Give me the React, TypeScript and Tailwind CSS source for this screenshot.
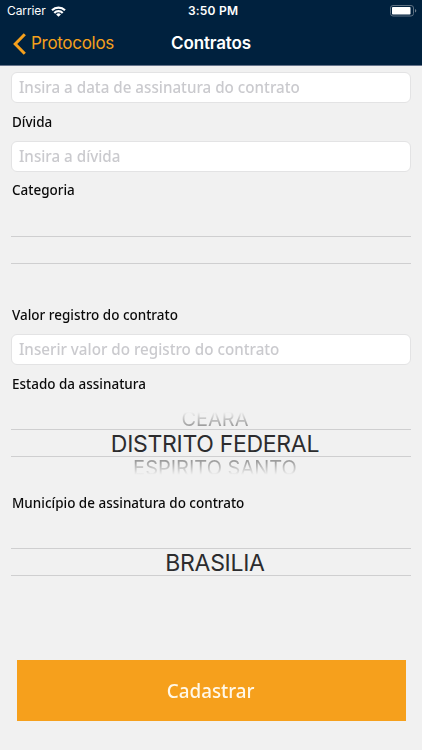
import type { ReactNode } from 'react';

function StatusBar() {
    return (
        <div className="relative flex h-[22px] items-center justify-between pl-[7px] pr-[5px] text-white">
            <div className="flex items-center gap-[5px]">
                <span className="text-[12px] tracking-[-0.1px]">Carrier</span>
                <svg width="15" height="11" viewBox="0 0 15 11" fill="none" stroke="white" strokeWidth="2.2">
                    <path d="M1 4.2a9.4 9.4 0 0 1 13 0" />
                    <path d="M3.3 7a5.8 5.8 0 0 1 8.4 0" />
                    <path d="M7.5 10.8 5.1 8.5a3.4 3.4 0 0 1 4.8 0z" fill="white" stroke="none" />
                </svg>
            </div>
            <span className="absolute left-[188px] text-[12px] font-semibold tracking-[0.2px]">3:50 PM</span>
            <svg width="27" height="12" viewBox="0 0 27 12">
                <rect x="0.5" y="0.5" width="23" height="10.5" rx="2.5" fill="none" stroke="#5d7082" />
                <rect x="2" y="2" width="18.5" height="7.5" rx="0.8" fill="white" />
                <path d="M25 4v3.6c1.8-.6 1.8-3 0-3.6z" fill="#71818f" />
            </svg>
        </div>
    );
}

function NavBar() {
    return (
        <div className="relative flex h-[43px] items-center justify-center">
            <button className="absolute left-[13px] flex items-center gap-[5px] text-[#f5a01c]">
                <svg width="13" height="22" viewBox="0 0 13 22" fill="none" stroke="currentColor" strokeWidth="3">
                    <path d="M11.8 1.2 2.2 11l9.6 9.8" />
                </svg>
                <span className="text-[17px] tracking-[-0.3px]">Protocolos</span>
            </button>
            <h1 className="text-[17px] font-semibold tracking-[-0.15px] text-white">Contratos</h1>
        </div>
    );
}

function Label({ children }: { children: ReactNode }) {
    return (
        <div className="flex h-[37px] items-center pl-[0.5px] font-['Noto_Sans',sans-serif] text-[15px] font-medium text-[#0a0a0a]">
            <span className="origin-left scale-x-[0.898] whitespace-nowrap">{children}</span>
        </div>
    );
}

function Field({ placeholder }: { placeholder: string }) {
    return (
        <div className="flex h-[31px] items-center rounded-[6px] border border-[#e3e3e4] bg-white pb-[2px] pl-[7px] font-['Noto_Sans',sans-serif] text-[17px] font-medium text-[#cacace]">
            <span className="origin-left scale-x-[0.893] whitespace-nowrap">{placeholder}</span>
        </div>
    );
}

function Picker({ previous, value, next }: { previous?: string; value?: string; next?: string }) {
    return (
        <div className="flex flex-col text-center">
            <div className="flex h-[27px] flex-col justify-end">
                {previous && (
                    <div className="bg-linear-to-b from-[#f1f1f1] from-15% to-[#9c9c9c] to-85% bg-clip-text pl-[8px] text-[20px] leading-[20px] text-transparent">
                        {previous}
                    </div>
                )}
            </div>
            <div className="h-[28px] border-y border-[#cfcfd0] pl-[8px] pt-[1px] text-[23px] leading-[26px] tracking-[-0.3px] text-[#2c2c2e]">
                {value}
            </div>
            <div className="h-[27px]">
                {next && (
                    <div className="bg-linear-to-b from-[#9c9c9c] from-20% to-[#f1f1f1] to-85% bg-clip-text pl-[8px] pt-[1px] text-[20px] leading-[20px] text-transparent">
                        {next}
                    </div>
                )}
            </div>
        </div>
    );
}

export default function App() {
    return (
        <div className="flex h-[750px] w-[422px] flex-col overflow-hidden bg-[#f1f1f1] font-['Inter',sans-serif]">
            <header className="h-[66px] border-b border-[#66748b] bg-[#00213e]">
                <StatusBar />
                <NavBar />
            </header>
            <main className="flex flex-1 flex-col px-[11px] pt-[6px]">
                <Field placeholder="Insira a data de assinatura do contrato" />
                <Label>Dívida</Label>
                <div className="pt-[1px]">
                    <Field placeholder="Insira a dívida" />
                </div>
                <div className="-mt-[1px] pb-[1px]">
                    <Label>Categoria</Label>
                </div>
                <Picker />
                <div className="pb-[1px] pt-[5px]">
                    <Label>Valor registro do contrato</Label>
                </div>
                <Field placeholder="Inserir valor do registro do contrato" />
                <Label>Estado da assinatura</Label>
                <Picker previous="CEARA" value="DISTRITO FEDERAL" next="ESPIRITO SANTO" />
                <Label>Município de assinatura do contrato</Label>
                <Picker value="BRASILIA" />
                <button className="ml-[6px] mr-[5px] mt-auto mb-[29px] flex h-[61px] items-center justify-center bg-[#f6a01c] pr-[1px] font-['Noto_Sans',sans-serif] text-[20px] font-medium text-[#fff8e9]">
                    <span className="scale-x-[0.94]">Cadastrar</span>
                </button>
            </main>
        </div>
    );
}
